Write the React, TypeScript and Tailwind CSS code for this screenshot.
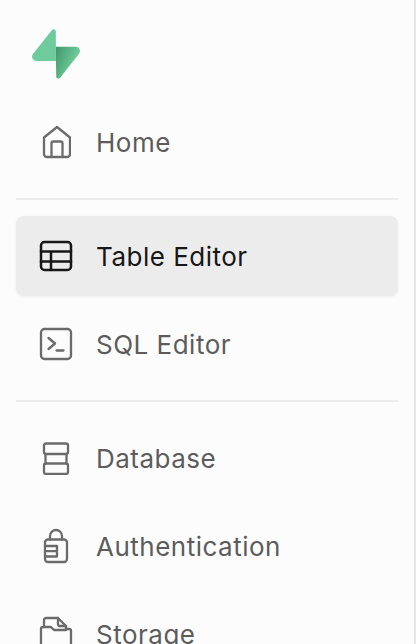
const stroke = { fill: "none", stroke: "currentColor", strokeWidth: 2.3, strokeLinecap: "round" as const, strokeLinejoin: "round" as const };

function Logo() {
  return (
    <svg width="48" height="50" viewBox="0 0 109 113" fill="none">
      <path d="M63.7076 110.284C60.8481 113.885 55.0502 111.912 54.9813 107.314L53.9738 40.0627L99.1935 40.0627C107.384 40.0627 111.952 49.5228 106.859 55.9374L63.7076 110.284Z" fill="url(#g)" />
      <path d="M45.317 2.07103C48.1765 -1.53037 53.9745 0.442937 54.0434 5.041L54.4849 72.2922H9.83113C1.64038 72.2922 -2.92775 62.8321 2.1655 56.4175L45.317 2.07103Z" fill="#6fcb9b" />
      <defs>
        <linearGradient id="g" x1="54" y1="50" x2="98" y2="68" gradientUnits="userSpaceOnUse">
          <stop stopColor="#46976d" />
          <stop offset="1" stopColor="#6ccb99" />
        </linearGradient>
      </defs>
    </svg>
  );
}

const Home = () => (
  <svg width="30" height="34" viewBox="0 0 30 34" {...stroke}>
    <path d="M3 12.5 16 2l13 10.5V29a3 3 0 0 1-3 3H6a3 3 0 0 1-3-3Z" />
    <path d="M10.5 32V18.5a2 2 0 0 1 2-2h7a2 2 0 0 1 2 2V32" />
  </svg>
);
const Table = () => (
  <svg width="34" height="32" viewBox="0 0 34 32" {...stroke} strokeWidth={2.5}>
    <rect x="2" y="2" width="30" height="28" rx="3.5" />
    <path d="M2 11.5h30M2 21.5h30M12 11.5V30" />
  </svg>
);
const Sql = () => (
  <svg width="34" height="34" viewBox="0 0 34 34" {...stroke}>
    <rect x="2" y="2" width="30" height="30" rx="3.5" />
    <path d="m9.5 11 6.5 5.5-6.5 5.5M17.5 23.5h7" />
  </svg>
);
const Db = () => (
  <svg width="28" height="34" viewBox="0 0 28 34" {...stroke}>
    <rect x="2" y="2.5" width="24" height="10.5" rx="2" />
    <rect x="2" y="22.5" width="24" height="10.5" rx="2" />
    <path d="M3.5 13v9.5M24.5 13v9.5" />
  </svg>
);
const Auth = () => (
  <svg width="26" height="36" viewBox="0 0 26 36" {...stroke}>
    <path d="M7 11.5V8a6 6 0 0 1 12 0v3.5" />
    <path d="M2 14.5a3 3 0 0 1 3-3h16a3 3 0 0 1 3 3V31a3 3 0 0 1-3 3H5a3 3 0 0 1-3-3Z" />
    <path d="M3 18h11v10.5H3M3 23.2h11" />
  </svg>
);
const Storage = () => (
  <svg width="34" height="36" viewBox="0 0 34 36" {...stroke}>
    <path d="M2 34V13a2 2 0 0 1 2-2h1V4a2 2 0 0 1 2-2h12l8 8v3h3a2 2 0 0 1 2 2v19" />
    <path d="M5 11h7l3 3h12M19 2v6a2 2 0 0 0 2 2h6" />
  </svg>
);

function Item({ icon, label, active }: { icon: React.ReactNode; label: string; active?: boolean }) {
  return (
    <div className={active
      ? "flex h-20 items-center rounded-lg bg-[#ececec] shadow-[0_1px_3px_rgba(0,0,0,0.06)] text-[#171717]"
      : "flex h-20 items-center rounded-lg text-[#5c5c5c]"}>
      <div className={active ? "flex w-20 shrink-0 justify-center text-[#171717]" : "flex w-20 shrink-0 justify-center text-[#6b6b6b]"}>{icon}</div>
      <span className="pt-0.5 text-[26px] leading-none tracking-[0.5px] font-normal">{label}</span>
    </div>
  );
}

export default function App() {
  return (
    <div className="h-[644px] w-[416px] overflow-hidden border-r-2 border-[#e6e6e6] bg-[#fcfcfc] pl-4 pr-4 pt-[29px] font-['Inter','Liberation_Sans',sans-serif]">
      <div className="pl-4 h-[51px]"><Logo /></div>
      <div className="mt-[22px]">
        <Item icon={<Home />} label="Home" />
      </div>
      <div className="mt-4 h-0.5 bg-[#ededed]" />
      <div className="mt-4 flex flex-col gap-2">
        <Item icon={<Table />} label="Table Editor" active />
        <Item icon={<Sql />} label="SQL Editor" />
      </div>
      <div className="mt-4 h-0.5 bg-[#ededed]" />
      <div className="mt-4 flex flex-col gap-2">
        <Item icon={<Db />} label="Database" />
        <Item icon={<Auth />} label="Authentication" />
        <Item icon={<Storage />} label="Storage" />
      </div>
    </div>
  );
}
